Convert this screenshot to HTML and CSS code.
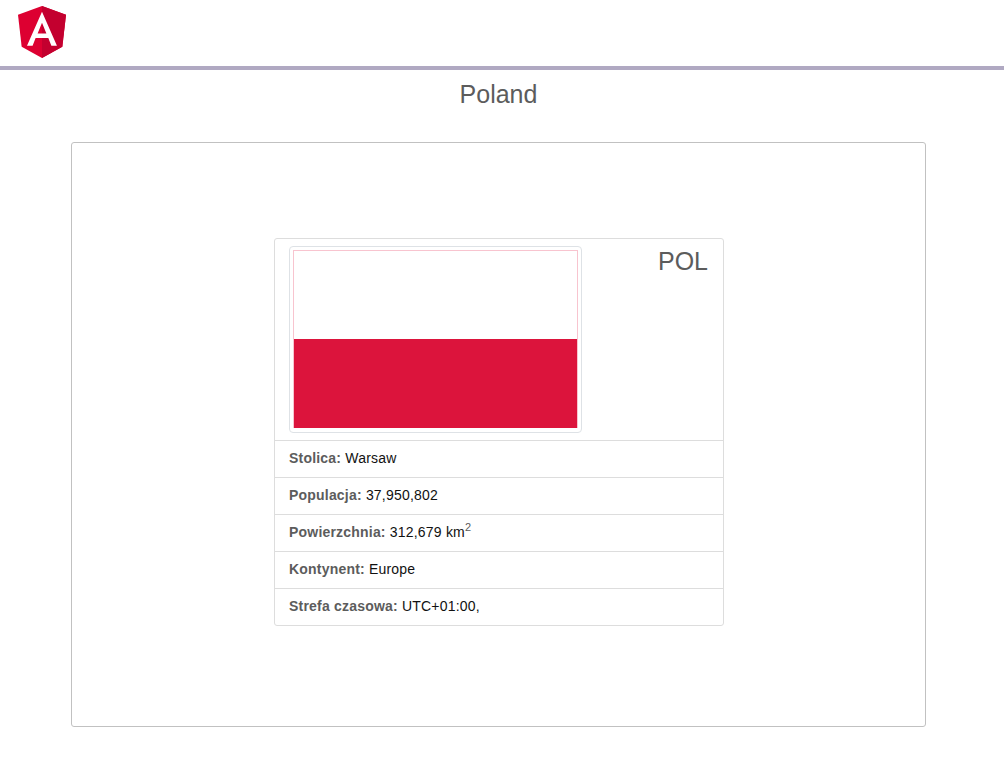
FILE: index.html
```html
<!DOCTYPE html>
<html lang="pl">
<head>
<meta charset="utf-8">
<title>Poland</title>
<link rel="stylesheet" href="styles.css">
</head>
<body>
<header class="topbar">
  <svg class="logo" viewBox="31.9 30 186.2 200" preserveAspectRatio="none" aria-label="Angular">
    <path fill="#dd0031" d="M125 30 31.9 63.2l14.2 123.1L125 230l78.9-43.7 14.2-123.1z"/>
    <path fill="#c3002f" d="M125 30v200l78.9-43.7 14.2-123.1z"/>
    <path fill="#fff" d="M125 52.1 66.8 182.6h21.7l11.7-29.2h49.4l11.7 29.2H183zm17 83.3h-34l17-40.9z"/>
  </svg>
</header>
<main class="page">
  <h1 class="title">Poland</h1>
  <section class="panel">
    <article class="card">
      <div class="card-head">
        <div class="flag-frame"><div class="flag"></div></div>
        <h2 class="code">POL</h2>
      </div>
      <div class="row"><b>Stolica:</b> Warsaw</div>
      <div class="row"><b>Populacja:</b> 37,950,802</div>
      <div class="row"><b>Powierzchnia:</b> 312,679 km<sup>2</sup></div>
      <div class="row"><b>Kontynent:</b> Europe</div>
      <div class="row"><b>Strefa czasowa:</b> UTC+01:00,</div>
    </article>
  </section>
</main>
</body>
</html>
```
FILE: styles.css
```css
* { box-sizing: border-box; }
body {
  margin: 0;
  background: #fff;
  color: #000;
  font: 14px/24px "Liberation Sans", Arial, sans-serif;
}
.topbar {
  height: 70px;
  padding: 6px 18px;
  border-bottom: 4px solid #b0a9c2;
}
.logo { display: block; width: 48px; height: 52px; }
.title, .code {
  margin: 0;
  color: #5c5c5c;
  font-size: 25px;
  font-weight: 400;
  line-height: 48px;
}
.title { padding-right: 7px; text-align: center; }
.panel {
  width: 855px;
  height: 585px;
  margin: 24px 0 0 71px;
  padding: 95px 0 0 202px;
  border: 1px solid #c1c1c1;
  border-radius: 3px;
}
.card {
  width: 450px;
  border: 1px solid #ddd;
  border-radius: 3px;
}
.card-head {
  display: flex;
  justify-content: space-between;
  align-items: flex-start;
  height: 201px;
  padding: 7px 15px 0 14px;
}
.flag-frame {
  width: 293px;
  height: 187px;
  padding: 3px;
  border: 1px solid #dee2e6;
  border-radius: 4px;
}
.flag {
  height: 178px;
  border: 1px solid #f8c4cf;
  border-bottom: 0;
  background: linear-gradient(#fff 88px, #dc143c 88px);
}
.code { line-height: 31px; }
.row {
  height: 37px;
  padding: 5px 14px;
  border-top: 1px solid #ddd;
  color: #111;
  letter-spacing: 0.2px;
  white-space: nowrap;
}
.row b { color: #5c5c5c; }
.row sup {
  position: relative;
  top: -6px;
  color: #5c5c5c;
  font-size: 11px;
  line-height: 0;
  vertical-align: baseline;
}
```
